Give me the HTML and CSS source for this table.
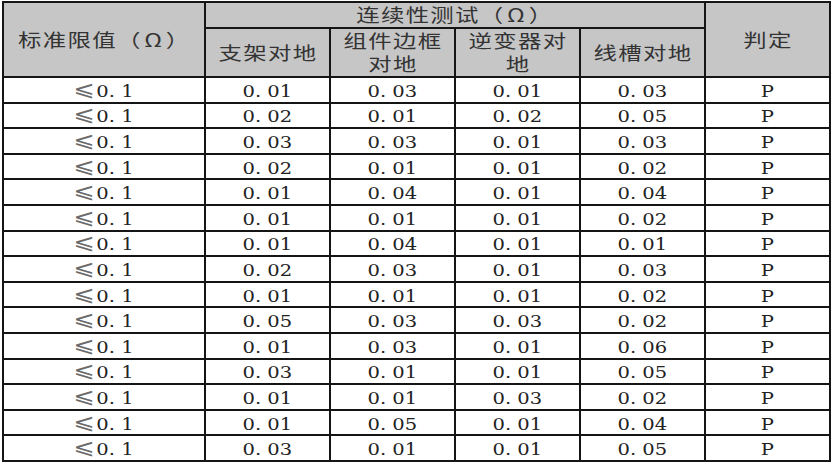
FILE: index.html
```html
<!DOCTYPE html>
<html lang="zh">
<head>
<meta charset="utf-8">
<link rel="stylesheet" href="styles.css">
</head>
<body>
<table class="grid">
<colgroup>
<col class="c-std"><col class="c-n"><col class="c-n"><col class="c-n"><col class="c-n"><col class="c-n">
</colgroup>
<thead>
<tr class="h1">
<th rowspan="2"><span class="zh">标准限值（<span class="om">Ω</span>）</span></th>
<th colspan="4"><span class="zh">连续性测试（<span class="om">Ω</span>）</span></th>
<th rowspan="2"><span class="zh">判定</span></th>
</tr>
<tr class="h2">
<th><span class="zh">支架对地</span></th>
<th><span class="zh two">组件边框<br>对地</span></th>
<th><span class="zh two">逆变器对<br>地</span></th>
<th><span class="zh">线槽对地</span></th>
</tr>
</thead>
<tbody>
<tr><td><span class="num"><span class="le">⩽</span>0. 1</span></td><td><span class="num">0. 01</span></td><td><span class="num">0. 03</span></td><td><span class="num">0. 01</span></td><td><span class="num">0. 03</span></td><td><span class="num">P</span></td></tr>
<tr><td><span class="num"><span class="le">⩽</span>0. 1</span></td><td><span class="num">0. 02</span></td><td><span class="num">0. 01</span></td><td><span class="num">0. 02</span></td><td><span class="num">0. 05</span></td><td><span class="num">P</span></td></tr>
<tr><td><span class="num"><span class="le">⩽</span>0. 1</span></td><td><span class="num">0. 03</span></td><td><span class="num">0. 03</span></td><td><span class="num">0. 01</span></td><td><span class="num">0. 03</span></td><td><span class="num">P</span></td></tr>
<tr><td><span class="num"><span class="le">⩽</span>0. 1</span></td><td><span class="num">0. 02</span></td><td><span class="num">0. 01</span></td><td><span class="num">0. 01</span></td><td><span class="num">0. 02</span></td><td><span class="num">P</span></td></tr>
<tr><td><span class="num"><span class="le">⩽</span>0. 1</span></td><td><span class="num">0. 01</span></td><td><span class="num">0. 04</span></td><td><span class="num">0. 01</span></td><td><span class="num">0. 04</span></td><td><span class="num">P</span></td></tr>
<tr><td><span class="num"><span class="le">⩽</span>0. 1</span></td><td><span class="num">0. 01</span></td><td><span class="num">0. 01</span></td><td><span class="num">0. 01</span></td><td><span class="num">0. 02</span></td><td><span class="num">P</span></td></tr>
<tr><td><span class="num"><span class="le">⩽</span>0. 1</span></td><td><span class="num">0. 01</span></td><td><span class="num">0. 04</span></td><td><span class="num">0. 01</span></td><td><span class="num">0. 01</span></td><td><span class="num">P</span></td></tr>
<tr><td><span class="num"><span class="le">⩽</span>0. 1</span></td><td><span class="num">0. 02</span></td><td><span class="num">0. 03</span></td><td><span class="num">0. 01</span></td><td><span class="num">0. 03</span></td><td><span class="num">P</span></td></tr>
<tr><td><span class="num"><span class="le">⩽</span>0. 1</span></td><td><span class="num">0. 01</span></td><td><span class="num">0. 01</span></td><td><span class="num">0. 01</span></td><td><span class="num">0. 02</span></td><td><span class="num">P</span></td></tr>
<tr><td><span class="num"><span class="le">⩽</span>0. 1</span></td><td><span class="num">0. 05</span></td><td><span class="num">0. 03</span></td><td><span class="num">0. 03</span></td><td><span class="num">0. 02</span></td><td><span class="num">P</span></td></tr>
<tr><td><span class="num"><span class="le">⩽</span>0. 1</span></td><td><span class="num">0. 01</span></td><td><span class="num">0. 03</span></td><td><span class="num">0. 01</span></td><td><span class="num">0. 06</span></td><td><span class="num">P</span></td></tr>
<tr><td><span class="num"><span class="le">⩽</span>0. 1</span></td><td><span class="num">0. 03</span></td><td><span class="num">0. 01</span></td><td><span class="num">0. 01</span></td><td><span class="num">0. 05</span></td><td><span class="num">P</span></td></tr>
<tr><td><span class="num"><span class="le">⩽</span>0. 1</span></td><td><span class="num">0. 01</span></td><td><span class="num">0. 01</span></td><td><span class="num">0. 03</span></td><td><span class="num">0. 02</span></td><td><span class="num">P</span></td></tr>
<tr><td><span class="num"><span class="le">⩽</span>0. 1</span></td><td><span class="num">0. 01</span></td><td><span class="num">0. 05</span></td><td><span class="num">0. 01</span></td><td><span class="num">0. 04</span></td><td><span class="num">P</span></td></tr>
<tr><td><span class="num"><span class="le">⩽</span>0. 1</span></td><td><span class="num">0. 03</span></td><td><span class="num">0. 01</span></td><td><span class="num">0. 01</span></td><td><span class="num">0. 05</span></td><td><span class="num">P</span></td></tr>
</tbody>
</table>
</body>
</html>
```
FILE: styles.css
```css
html, body {
  margin: 0;
  padding: 0;
  background: #ffffff;
  overflow: hidden;
}

body {
  padding: 1px 0 0 2px;
}

.grid {
  border-collapse: collapse;
  table-layout: fixed;
  width: 829px;
  font-family: "Noto Sans CJK SC", sans-serif;
}

.c-std { width: 202px; }
.c-n { width: 125px; }

.grid th,
.grid td {
  border: 2px solid #151515;
  padding: 0;
  text-align: center;
  overflow: hidden;
  white-space: nowrap;
}

.grid th {
  background: #c6c6c6;
  font-weight: 400;
  color: #333333;
}

.grid thead .h1 { height: 26px; }
.grid thead .h2 { height: 48px; }

.grid tbody tr { height: 25.6px; }

.grid td {
  height: 19px;
  padding-top: 4px;
  line-height: 18px;
  color: #222222;
}

.zh {
  display: inline-block;
  font-size: 18px;
  line-height: 22px;
  letter-spacing: 1px;
  transform: scaleX(1.3);
}

.zh .om {
  margin: 0 2px;
}

.zh.two {
  line-height: 23px;
}

.num {
  display: inline-block;
  height: 18px;
  font-family: "DejaVu Serif", "Liberation Serif", serif;
  font-size: 16px;
  line-height: 18px;
  vertical-align: top;
  transform: scaleX(1.22);
}

.le {
  display: inline-block;
  height: 18px;
  font-family: "DejaVu Sans", sans-serif;
  font-size: 21px;
  line-height: 13px;
  vertical-align: top;
  color: #6a6a6a;
  margin-right: 1px;
}
```
